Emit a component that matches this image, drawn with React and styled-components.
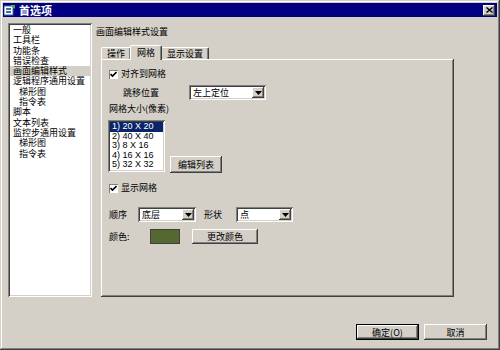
import React from 'react';
import styled, { createGlobalStyle } from 'styled-components';

const GlobalStyle = createGlobalStyle`
  html, body {
    margin: 0;
    padding: 0;
    background: #d4d0c8;
  }
  body {
    font-family: "Noto Sans CJK SC", "Liberation Sans", sans-serif;
    font-size: 9px;
    color: #000;
  }
  * {
    box-sizing: border-box;
  }
`;

const Window = styled.div`
  width: 500px;
  height: 350px;
  padding: 3px;
  display: flex;
  flex-direction: column;
  background: #d4d0c8;
  box-shadow: inset -1px -1px #404040, inset 1px 1px #d4d0c8,
    inset -2px -2px #808080, inset 2px 2px #fff;
`;

const TitleBar = styled.div`
  height: 14px;
  background: #000080;
  display: flex;
  align-items: center;
  padding: 0 1px 0 1px;
  color: #fff;
`;

const Title = styled.span`
  margin-left: 3px;
  font-weight: bold;
  font-size: 11px;
  line-height: 14px;
  flex: 1;
`;

const CloseButton = styled.div`
  width: 12px;
  height: 11px;
  margin-right: 1px;
  background: #d4d0c8;
  display: flex;
  align-items: center;
  justify-content: center;
  box-shadow: inset -1px -1px #404040, inset 1px 1px #fff, inset -2px -2px #808080;
`;

const Main = styled.div`
  flex: 1;
  display: flex;
  flex-direction: column;
  padding: 6px 10px 0 5px;
`;

const TopRow = styled.div`
  display: flex;
  height: 274px;
`;

const Sidebar = styled.div`
  width: 84px;
  height: 100%;
  background: #fff;
  padding: 2px 2px;
  box-shadow: inset 1px 1px #808080, inset -1px -1px #fff,
    inset 2px 2px #404040, inset -2px -2px #d4d0c8;
`;

const NavItem = styled.div`
  height: 10.3px;
  line-height: 10.3px;
  padding-left: ${(p) => (p.$sub ? 9 : 3)}px;
  white-space: nowrap;
  background: ${(p) => (p.$active ? '#d4d0c8' : 'transparent')};
`;

const RightCol = styled.div`
  margin-left: 4px;
  display: flex;
  flex-direction: column;
`;

const Heading = styled.div`
  height: 17px;
  line-height: 17px;
`;

const TabStrip = styled.div`
  margin: 5px 0 0 5px;
  height: 14px;
  display: flex;
  align-items: flex-end;
  position: relative;
  z-index: 1;
`;

const Tab = styled.div`
  height: ${(p) => (p.$active ? 15 : 12)}px;
  margin-bottom: ${(p) => (p.$active ? -1 : 0)}px;
  padding: 0 ${(p) => (p.$active ? 6 : 5)}px;
  line-height: ${(p) => (p.$active ? 13 : 12)}px;
  background: #d4d0c8;
  border-top: 1px solid #fff;
  border-left: 1px solid #fff;
  border-right: 1px solid #404040;
  box-shadow: inset -1px 0 #808080;
  border-radius: 2px 2px 0 0;
  margin-left: ${(p) => (p.$active ? -1 : 0)}px;
  margin-right: ${(p) => (p.$active ? -1 : 0)}px;
  z-index: ${(p) => (p.$active ? 2 : 1)};
  position: relative;
`;

const TabPanel = styled.div`
  margin-left: 5px;
  width: 353px;
  flex: 1;
  padding: 0 8px 0 8px;
  display: flex;
  flex-direction: column;
  box-shadow: inset -1px -1px #404040, inset 1px 1px #fff, inset -2px -2px #808080;
`;

const Row = styled.div`
  display: flex;
  align-items: ${(p) => p.$align || 'center'};
  height: ${(p) => p.$h}px;
  margin-top: ${(p) => p.$mt}px;
`;

const CheckBox = styled.div`
  width: 9px;
  height: 9px;
  background: #fff;
  margin-right: 3px;
  display: flex;
  align-items: center;
  justify-content: center;
  box-shadow: inset 1px 1px #808080, inset -1px -1px #fff;
`;

const Label = styled.span`
  width: ${(p) => (p.$w ? `${p.$w}px` : 'auto')};
  margin-left: ${(p) => p.$ml || 0}px;
  white-space: nowrap;
  line-height: 12px;
`;

const SelectBox = styled.div`
  width: ${(p) => p.$w}px;
  height: ${(p) => p.$h || 15}px;
  background: #fff;
  display: flex;
  align-items: stretch;
  padding: 2px;
  box-shadow: inset 1px 1px #808080, inset -1px -1px #fff,
    inset 2px 2px #404040, inset -2px -2px #d4d0c8;
`;

const SelectValue = styled.span`
  flex: 1;
  padding-left: 2px;
  line-height: 11px;
`;

const ArrowButton = styled.div`
  width: 12px;
  background: #d4d0c8;
  display: flex;
  align-items: center;
  justify-content: center;
  box-shadow: inset -1px -1px #404040, inset 1px 1px #fff, inset -2px -2px #808080;
`;

const ListBox = styled.div`
  width: 57px;
  height: 52px;
  margin-left: -1px;
  background: #fff;
  padding: 2px;
  font-family: "Liberation Sans", sans-serif;
  box-shadow: inset 1px 1px #808080, inset -1px -1px #fff,
    inset 2px 2px #404040, inset -2px -2px #d4d0c8;
`;

const ListItem = styled.div`
  height: 9.6px;
  line-height: 9.6px;
  padding-left: 2px;
  white-space: nowrap;
  color: ${(p) => (p.$selected ? '#fff' : '#000')};
  background: ${(p) => (p.$selected ? '#0a246a' : 'transparent')};
`;

const Button = styled.div`
  width: ${(p) => p.$w}px;
  height: ${(p) => p.$h || 17}px;
  margin-left: ${(p) => p.$ml || 0}px;
  display: flex;
  align-items: center;
  justify-content: center;
  background: #d4d0c8;
  white-space: nowrap;
  box-shadow: ${(p) =>
    p.$default
      ? 'inset -1px -1px #000, inset 1px 1px #000, inset -2px -2px #404040, inset 2px 2px #fff, inset -3px -3px #808080'
      : 'inset -1px -1px #404040, inset 1px 1px #fff, inset -2px -2px #808080'};
`;

const Swatch = styled.div`
  width: 30px;
  height: 15px;
  margin-left: 14px;
  background: ${(p) => p.$color};
  border: 1px solid #404040;
`;

const Footer = styled.div`
  display: flex;
  justify-content: flex-end;
  margin-top: 27px;
`;

const Arrow = () => (
  <svg width="7" height="4" viewBox="0 0 7 4">
    <path d="M0 0h7L3.5 4z" fill="#000" />
  </svg>
);

const Check = () => (
  <svg width="7" height="7" viewBox="0 0 7 7">
    <path d="M0.5 3 L2.5 5 L6.5 1" stroke="#000" strokeWidth="1.6" fill="none" />
  </svg>
);

const AppIcon = () => (
  <svg width="12" height="12" viewBox="0 0 12 12">
    <rect x="0" y="2" width="9" height="9" fill="#fff" stroke="#3a6ea5" />
    <rect x="2" y="4" width="5" height="2" fill="#3a6ea5" />
    <rect x="2" y="7" width="5" height="2" fill="#3a6ea5" />
    <path d="M6 1h5v4z" fill="#4caf50" />
  </svg>
);

const navItems = [
  { text: '一般' },
  { text: '工具栏' },
  { text: '功能条' },
  { text: '错误检查' },
  { text: '画面编辑样式', active: true },
  { text: '逻辑程序通用设置' },
  { text: '梯形图', sub: true },
  { text: '指令表', sub: true },
  { text: '脚本' },
  { text: '文本列表' },
  { text: '监控步通用设置' },
  { text: '梯形图', sub: true },
  { text: '指令表', sub: true },
];

const gridSizes = ['1) 20 X 20', '2) 40 X 40', '3) 8 X 16', '4) 16 X 16', '5) 32 X 32'];

const Select = ({ w, h, value }) => (
  <SelectBox $w={w} $h={h}>
    <SelectValue>{value}</SelectValue>
    <ArrowButton>
      <Arrow />
    </ArrowButton>
  </SelectBox>
);

const App = () => (
  <>
    <GlobalStyle />
    <Window>
      <TitleBar>
        <AppIcon />
        <Title>首选项</Title>
        <CloseButton>
          <svg width="7" height="6" viewBox="0 0 7 6">
            <path d="M0.5 0.5L6.5 5.5M6.5 0.5L0.5 5.5" stroke="#000" strokeWidth="1.4" />
          </svg>
        </CloseButton>
      </TitleBar>
      <Main>
        <TopRow>
          <Sidebar>
            {navItems.map((item, i) => (
              <NavItem key={i} $sub={item.sub} $active={item.active}>
                {item.text}
              </NavItem>
            ))}
          </Sidebar>
          <RightCol>
            <Heading>画面编辑样式设置</Heading>
            <TabStrip>
              <Tab>操作</Tab>
              <Tab $active>网格</Tab>
              <Tab>显示设置</Tab>
            </TabStrip>
            <TabPanel>
              <Row $h={12} $mt={9}>
                <CheckBox>
                  <Check />
                </CheckBox>
                <Label>对齐到网格</Label>
              </Row>
              <Row $h={15} $mt={5}>
                <Label $ml={14} $w={66}>跳移位置</Label>
                <Select w={77} value="左上定位" />
              </Row>
              <Row $h={12} $mt={3}>
                <Label>网格大小(像素)</Label>
              </Row>
              <Row $h={53} $mt={5} $align="flex-start">
                <ListBox>
                  {gridSizes.map((s, i) => (
                    <ListItem key={s} $selected={i === 0}>
                      {s}
                    </ListItem>
                  ))}
                </ListBox>
                <Button $w={52} $ml={5} style={{ alignSelf: 'flex-end' }}>
                  编辑列表
                </Button>
              </Row>
              <Row $h={12} $mt={9}>
                <CheckBox>
                  <Check />
                </CheckBox>
                <Label>显示网格</Label>
              </Row>
              <Row $h={15} $mt={13}>
                <Label $w={29}>顺序</Label>
                <Select w={58} value="底层" />
                <Label $ml={8} $w={32}>形状</Label>
                <Select w={57} value="点" />
              </Row>
              <Row $h={15} $mt={7}>
                <Label $w={27}>颜色:</Label>
                <Swatch $color="#55682f" />
                <Button $w={66} $h={15} $ml={12}>
                  更改颜色
                </Button>
              </Row>
            </TabPanel>
          </RightCol>
        </TopRow>
        <Footer>
          <Button $w={63} $h={16} $default>
            确定(O)
          </Button>
          <Button $w={63} $h={16} $ml={5}>
            取消
          </Button>
        </Footer>
      </Main>
    </Window>
  </>
);

export default App;
